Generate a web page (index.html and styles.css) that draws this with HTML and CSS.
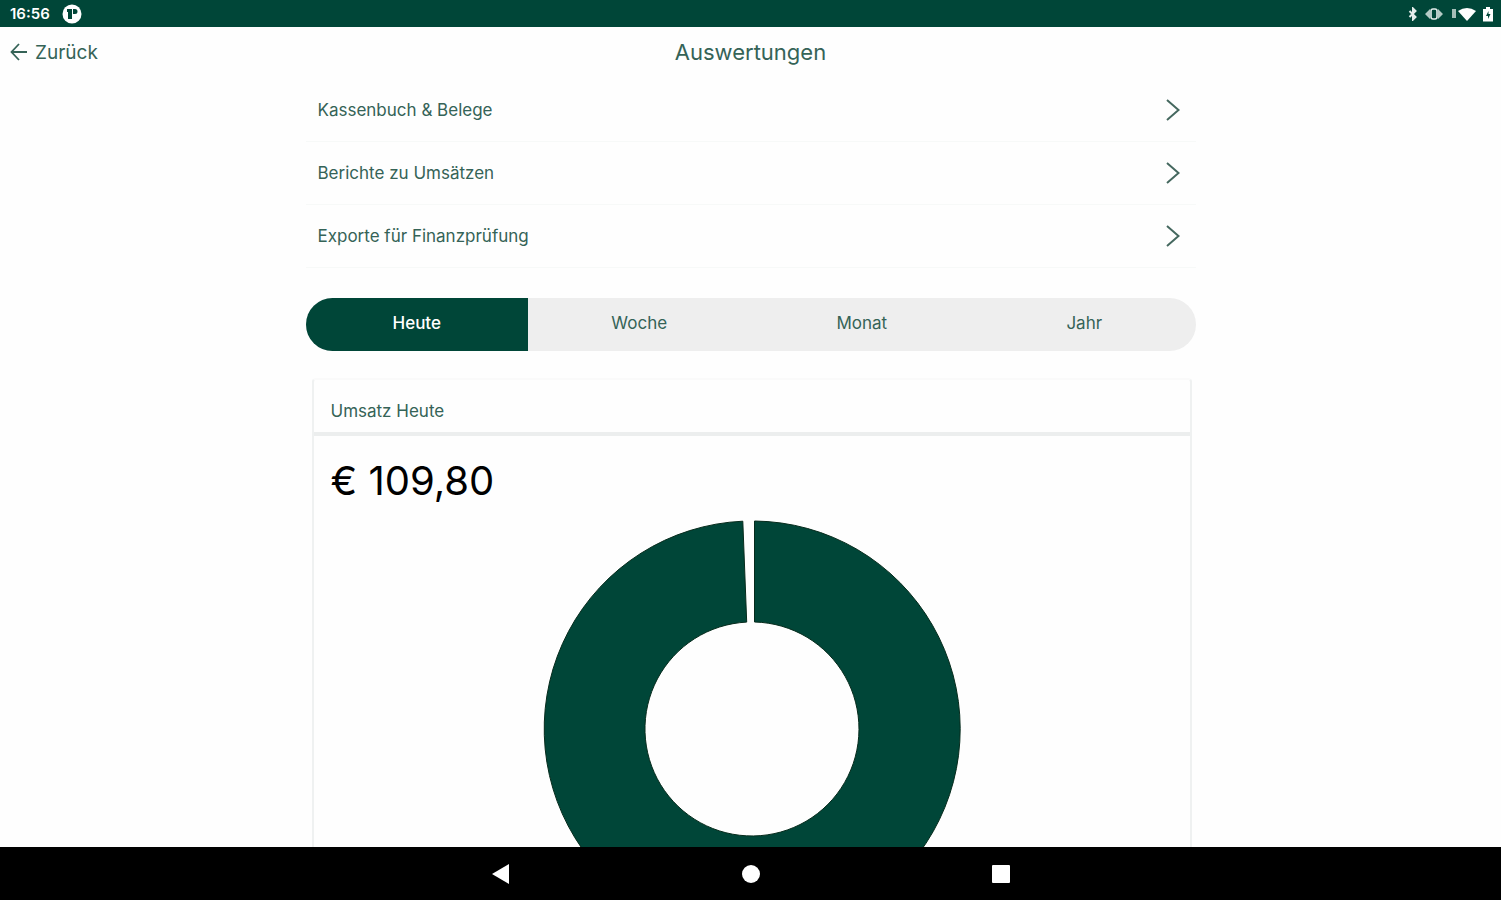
FILE: index.html
```html
<!DOCTYPE html>
<html lang="de">
<head>
    <meta charset="UTF-8">
    <meta name="viewport" content="width=device-width, initial-scale=1.0">
    <title>Auswertungen</title>
    <link rel="stylesheet" href="styles.css">
</head>
<body>
    <div class="status-bar">
        <div class="status-group">
            <span class="time">16:56</span>
            <svg width="20" height="20" viewBox="0 0 20 20">
                <circle cx="10" cy="10" r="9.5" fill="#fff"/>
                <path d="M5 5h5v10H6V8H5zM11 5h2a2.500 2.500 0 0 1 0 5h-2z" fill="#004638"/>
            </svg>
        </div>
        <div class="status-group status-icons">
            <svg width="10" height="14" viewBox="0 0 10 14">
                <path d="M1.500 4l6 6-2.500 2.500v-11L7.500 4l-6 6" fill="none" stroke="#e4edeb" stroke-width="2"/>
            </svg>
            <svg width="18" height="16" viewBox="0 0 18 16">
                <path d="M5 3v10L0 8zM13 3v10l5-5z" fill="#b5cac5"/>
                <rect x="6" y="3" width="6" height="10" rx="2" fill="none" stroke="#e4edeb" stroke-width="1.6"/>
            </svg>
            <svg width="26" height="16" viewBox="0 0 26 16">
                <path d="M2 3h4v9H2z" fill="#a5beb8"/>
                <path d="M8 5q9-6 18 0l-9 10z" fill="#fff"/>
            </svg>
            <svg width="10" height="16" viewBox="0 0 10 16">
                <path d="M3 1h4v2h3v12.500H0V3h3z" fill="#fff"/>
                <path d="M5.500 5L3 10h2v3l2.500-5h-2z" fill="#004638"/>
            </svg>
        </div>
    </div>

    <header class="header">
        <a href="#" class="back">
            <svg width="18" height="18" viewBox="0 0 18 18">
                <path d="M17 9H2M9 1L1.500 9 9 17" fill="none" stroke="currentColor" stroke-width="1.800"/>
            </svg>
            Zurück
        </a>
        <h1>Auswertungen</h1>
    </header>

    <main class="content">
        <div class="container">
            <nav class="menu">
                <a href="#">Kassenbuch &amp; Belege
                    <svg width="14" height="22" viewBox="0 0 14 22"><path d="M1 1l11.500 10L1 21"/></svg>
                </a>
                <a href="#">Berichte zu Umsätzen
                    <svg width="14" height="22" viewBox="0 0 14 22"><path d="M1 1l11.500 10L1 21"/></svg>
                </a>
                <a href="#">Exporte für Finanzprüfung
                    <svg width="14" height="22" viewBox="0 0 14 22"><path d="M1 1l11.500 10L1 21"/></svg>
                </a>
            </nav>

            <div class="tabs">
                <button type="button" class="active">Heute</button>
                <button type="button">Woche</button>
                <button type="button">Monat</button>
                <button type="button">Jahr</button>
            </div>

            <section class="card">
                <h2>Umsatz Heute</h2>
                <div class="card-body">
                    <p class="amount">€ 109,80</p>
                    <svg class="chart" width="420" height="420" viewBox="0 0 420 420">
                        <path d="M212.500 2A208 208 0 1 1 200.800 2.200L204.700 103.100A107 107 0 1 0 212.500 103Z" fill="#004638" stroke="#062b1c" stroke-width="1"/>
                    </svg>
                </div>
            </section>
        </div>
    </main>

    <footer class="nav-bar">
        <button type="button" aria-label="Zurück">
            <svg width="20" height="22" viewBox="0 0 20 22"><path d="M1 11L18 1v20z"/></svg>
        </button>
        <button type="button" aria-label="Start">
            <svg width="20" height="22" viewBox="0 0 20 22"><circle cx="10" cy="11" r="9"/></svg>
        </button>
        <button type="button" aria-label="Übersicht">
            <svg width="20" height="22" viewBox="0 0 20 22"><rect x="1" y="2" width="18" height="18" rx="1"/></svg>
        </button>
    </footer>
</body>
</html>
```
FILE: styles.css
```css
*{
    margin: 0;
    padding: 0;
    box-sizing: border-box;
}
body{
    height: 100vh;
    display: flex;
    flex-direction: column;
    overflow: hidden;
    background-color: #fefefe;
    color: #356357;
    font-family: Inter, "Liberation Sans", sans-serif;
    font-size: 17px;
}
a{
    color: inherit;
    text-decoration: none;
}
button{
    border: none;
    background-color: transparent;
    font: inherit;
    color: inherit;
    cursor: pointer;
}

.status-bar{
    height: 27px;
    flex-shrink: 0;
    display: flex;
    justify-content: space-between;
    align-items: center;
    padding: 0 8px 0 10px;
    background-color: #004638;
    color: #fff;
}
.status-group{
    display: flex;
    align-items: center;
    gap: 12px;
}
.status-icons{
    gap: 7px;
}
.time{
    font-size: 15px;
    font-weight: 600;
}

.header{
    height: 52px;
    flex-shrink: 0;
    display: grid;
    grid-template-columns: 1fr auto 1fr;
    align-items: center;
    padding: 0 10px 2px;
}
.back{
    display: flex;
    align-items: center;
    gap: 7px;
    font-size: 19px;
}
.header h1{
    font-size: 22px;
    font-weight: 400;
}

.content{
    flex: 1;
    min-height: 0;
    overflow: hidden;
}
.container{
    max-width: 890px;
    margin: 0 auto;
}
.menu a{
    height: 63px;
    display: flex;
    justify-content: space-between;
    align-items: center;
    padding: 0 16px 0 12px;
    border-bottom: 1px solid #f7f9f8;
}
.menu svg{
    fill: none;
    stroke: #45685f;
    stroke-width: 2;
}

.tabs{
    height: 53px;
    display: grid;
    grid-template-columns: repeat(4, 1fr);
    margin-top: 30px;
    border-radius: 27px;
    overflow: hidden;
    background-color: #eee;
}
.tabs button{
    padding-bottom: 4px;
}
.tabs .active{
    background-color: #004638;
    color: #fff;
    font-weight: 500;
}

.card{
    margin: 27px 4px 0 6px;
    border: 2px solid #eff1f1;
    border-top-color: #fafafa;
    border-radius: 4px;
}
.card h2{
    padding: 20px 17px 10px;
    border-bottom: 4px solid #eceeee;
    font-size: 17px;
    line-height: 22px;
    font-weight: 400;
}
.card-body{
    padding: 20px 17px;
}
.amount{
    color: #000;
    font-size: 40px;
    line-height: 50px;
}
.chart{
    display: block;
    margin: 13px auto 0;
}

.nav-bar{
    height: 53px;
    flex-shrink: 0;
    display: flex;
    justify-content: center;
    align-items: center;
    background-color: #000;
}
.nav-bar button{
    width: 250px;
    height: 100%;
}
.nav-bar svg{
    fill: #fff;
    vertical-align: middle;
}
```
